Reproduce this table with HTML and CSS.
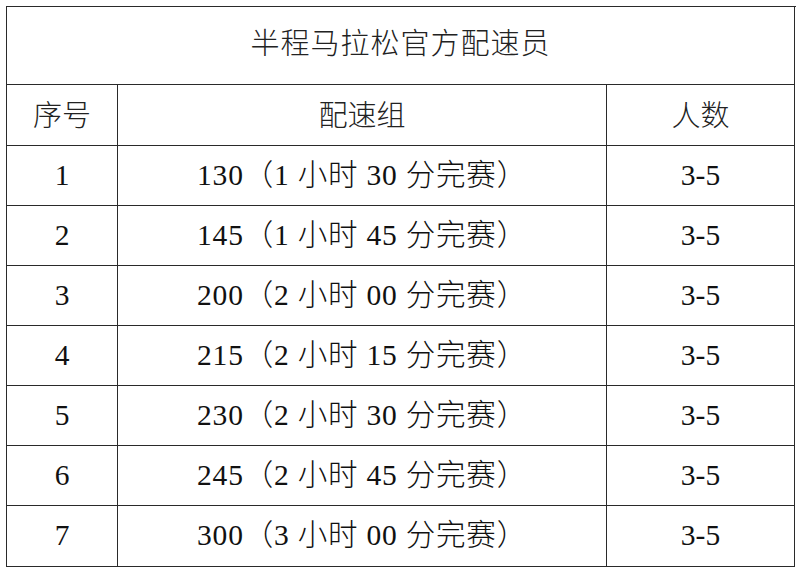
FILE: index.html
```html
<!DOCTYPE html>
<html lang="zh-CN">
<head>
<meta charset="utf-8">
<title>半程马拉松官方配速员</title>
<link rel="stylesheet" href="styles.css">
</head>
<body>
<div class="sheet">
  <div class="cell title">半程马拉松官方配速员</div>
  <div class="cell head">序号</div>
  <div class="cell head">配速组</div>
  <div class="cell head">人数</div>

  <div class="cell row">1</div>
  <div class="cell row pace">130（1 小时 30 分完赛）</div>
  <div class="cell row">3-5</div>

  <div class="cell row">2</div>
  <div class="cell row pace">145（1 小时 45 分完赛）</div>
  <div class="cell row">3-5</div>

  <div class="cell row">3</div>
  <div class="cell row pace">200（2 小时 00 分完赛）</div>
  <div class="cell row">3-5</div>

  <div class="cell row">4</div>
  <div class="cell row pace">215（2 小时 15 分完赛）</div>
  <div class="cell row">3-5</div>

  <div class="cell row">5</div>
  <div class="cell row pace">230（2 小时 30 分完赛）</div>
  <div class="cell row">3-5</div>

  <div class="cell row">6</div>
  <div class="cell row pace">245（2 小时 45 分完赛）</div>
  <div class="cell row">3-5</div>

  <div class="cell row">7</div>
  <div class="cell row pace">300（3 小时 00 分完赛）</div>
  <div class="cell row">3-5</div>
</div>
</body>
</html>
```

FILE: styles.css
```css
html, body {
  margin: 0;
  padding: 0;
  background: #ffffff;
}

body {
  padding: 6px 0 0 6px;
  font-family: "Liberation Serif", "Noto Sans CJK SC", serif;
  color: #111;
}

.sheet {
  display: grid;
  grid-template-columns: 111px 489px 188px;
  grid-template-rows: 78px 61px repeat(6, 60px) 61px;
  width: 789px;
  border-left: 1px solid #2a2a2a;
  border-top: 1px solid #2a2a2a;
}

.cell {
  display: flex;
  align-items: center;
  justify-content: center;
  border-right: 1px solid #2a2a2a;
  border-bottom: 1px solid #2a2a2a;
  font-size: 29px;
  font-weight: 300;
  line-height: 1;
  white-space: nowrap;
}

.title {
  grid-column: 1 / span 3;
  letter-spacing: 1px;
  color: #222;
  padding-bottom: 2px;
}

.head {
  color: #222;
  padding-top: 2px;
}

.row {
  font-size: 29.5px;
}

.pace {
  letter-spacing: 0.8px;
}
```
